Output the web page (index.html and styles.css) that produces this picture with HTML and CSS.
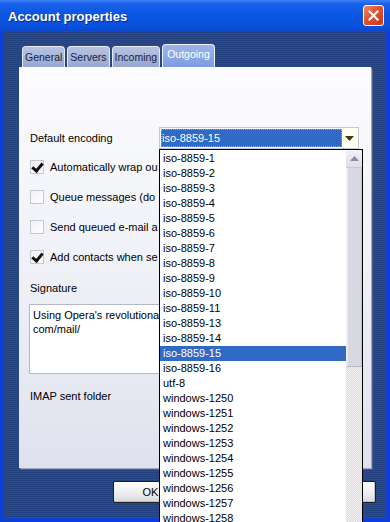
FILE: index.html
```html
<!DOCTYPE html>
<html lang="en">
<head>
  <meta charset="UTF-8" />
  <meta name="viewport" content="width=device-width, initial-scale=1.0"/>
  <title>Account properties</title>
  <link rel="stylesheet" href="styles.css">
</head>
<body>
  <div class="window">
    <div class="titlebar">
      <span class="title">Account properties</span>
      <button class="close" aria-label="Close">
        <svg width="11" height="11" viewBox="0 0 11 11">
          <path d="M1.5 1.5 L9.5 9.5 M9.5 1.5 L1.5 9.5" stroke="#fff" stroke-width="2.2" stroke-linecap="square"/>
        </svg>
      </button>
    </div>

    <div class="client">
      <ul class="tabs">
        <li class="tab">General</li>
        <li class="tab">Servers</li>
        <li class="tab">Incoming</li>
        <li class="tab active">Outgoing</li>
      </ul>

      <div class="panel">
        <div class="field-row">
          <label class="field-label">Default encoding</label>
          <div class="select">
            <span class="select-value">iso-8859-15</span>
            <span class="select-arrow">
              <svg width="9" height="5" viewBox="0 0 9 5"><path d="M0 0 H9 L4.5 5 Z" fill="#3d3b18"/></svg>
            </span>

            <div class="dropdown">
              <ul class="options">
                <li>iso-8859-1</li>
                <li>iso-8859-2</li>
                <li>iso-8859-3</li>
                <li>iso-8859-4</li>
                <li>iso-8859-5</li>
                <li>iso-8859-6</li>
                <li>iso-8859-7</li>
                <li>iso-8859-8</li>
                <li>iso-8859-9</li>
                <li>iso-8859-10</li>
                <li>iso-8859-11</li>
                <li>iso-8859-13</li>
                <li>iso-8859-14</li>
                <li class="selected">iso-8859-15</li>
                <li>iso-8859-16</li>
                <li>utf-8</li>
                <li>windows-1250</li>
                <li>windows-1251</li>
                <li>windows-1252</li>
                <li>windows-1253</li>
                <li>windows-1254</li>
                <li>windows-1255</li>
                <li>windows-1256</li>
                <li>windows-1257</li>
                <li>windows-1258</li>
              </ul>
              <div class="scrollbar">
                <div class="scroll-up">
                  <svg width="9" height="5" viewBox="0 0 9 5"><path d="M0 5 H9 L4.5 0 Z" fill="#8c8c98"/></svg>
                </div>
                <div class="scroll-thumb"></div>
                <div class="scroll-track"></div>
              </div>
            </div>
          </div>
        </div>

        <div class="check-row"><span class="checkbox checked"></span><span class="check-text">Automatically wrap outgoing text</span></div>
        <div class="check-row"><span class="checkbox"></span><span class="check-text">Queue messages (do not send immediately)</span></div>
        <div class="check-row"><span class="checkbox"></span><span class="check-text">Send queued e-mail after checking</span></div>
        <div class="check-row"><span class="checkbox checked"></span><span class="check-text">Add contacts when sending</span></div>

        <div class="section-label">Signature</div>
        <div class="signature">Using Opera's revolutionary e-mail client: http://www.opera.<br>com/mail/</div>

        <div class="section-label imap">IMAP sent folder</div>
      </div>

      <div class="buttons">
        <button class="btn">OK</button>
        <button class="btn">Cancel</button>
        <button class="btn">Help</button>
      </div>
    </div>
  </div>
</body>
</html>
```

FILE: styles.css
```css
* {
  margin: 0;
  padding: 0;
  box-sizing: border-box;
}

body {
  width: 390px;
  height: 522px;
  overflow: hidden;
  font-family: "Liberation Sans", Arial, sans-serif;
  font-size: 11px;
  color: #000;
}

.window {
  width: 390px;
  height: 522px;
  display: flex;
  flex-direction: column;
  background: #0c3fd6;
}

.titlebar {
  height: 31px;
  display: flex;
  align-items: center;
  justify-content: space-between;
  padding: 0 6px 0 8px;
  background: linear-gradient(to bottom, #3b80f4 0, #1760ea 4px, #0b56e2 14px, #0a51dc 26px, #0a48cc 31px);
}

.title {
  color: #fff;
  font-weight: bold;
  font-size: 13px;
  text-shadow: 1px 1px 0 #0a2a8c;
  margin-top: 1px;
}

.close {
  width: 21px;
  height: 21px;
  border: 1px solid #fff;
  border-radius: 3px;
  background: linear-gradient(to bottom right, #ef8a6a, #e0502e 45%, #c83a1a);
  display: flex;
  align-items: center;
  justify-content: center;
  margin-top: -1px;
}

.client {
  flex: 1;
  margin: 0 4px 4px 4px;
  background: repeating-linear-gradient(to bottom, #2c4b8b 0 1px, #23427f 1px 2px);
  padding: 13px 0 0 15px;
  display: flex;
  flex-direction: column;
}

.tabs {
  list-style: none;
  display: flex;
  align-items: flex-end;
  gap: 2px;
  padding-left: 3px;
  height: 23px;
}

.tab {
  height: 21px;
  padding: 0 2px;
  line-height: 21px;
  font-size: 10.5px;
  color: #1a2240;
  background: linear-gradient(to bottom, #b8c3e0, #97a7d0);
  border: 1px solid #e6eaf4;
  border-bottom: none;
  border-radius: 4px 4px 0 0;
}

.tab.active {
  height: 23px;
  line-height: 19px;
  padding: 0 4px;
  color: #fff;
  background: linear-gradient(to bottom, #9bb4ea, #7d9ddf);
  border-color: #eef2fb;
}

.panel {
  width: 352px;
  height: 401px;
  background: linear-gradient(to bottom, #fcfcfe 0%, #eff1f7 50%, #dfe2ee 100%);
  box-shadow: 1px 1px 0 #9aa2bc, 2px 2px 0 #4c5f8e;
  padding: 60px 0 0 10px;
  display: flex;
  flex-direction: column;
}

.field-row {
  display: flex;
  align-items: center;
  height: 22px;
}

.field-label {
  width: 130px;
  padding-left: 1px;
}

.select {
  position: relative;
  width: 200px;
  height: 22px;
  border: 1px solid #c4c8d4;
  background: #fff;
  display: flex;
  padding: 1px;
}

.select-value {
  flex: 1;
  background: #316ac5;
  color: #fff;
  outline: 1px dotted #8aa4d8;
  outline-offset: -1px;
  line-height: 18px;
  padding-left: 1px;
}

.select-arrow {
  width: 15px;
  background: #fffff0;
  display: flex;
  align-items: center;
  justify-content: center;
}

.dropdown {
  position: absolute;
  top: 21px;
  left: -1px;
  width: 204px;
  height: 380px;
  background: #fff;
  border: 1px solid #000;
  display: flex;
  z-index: 2;
}

.options {
  list-style: none;
  flex: 1;
  padding-top: 1px;
}

.options li {
  height: 15px;
  line-height: 15px;
  padding-left: 3px;
}

.options li.selected {
  background: #316ac5;
  color: #fff;
}

.scrollbar {
  width: 16px;
  display: flex;
  flex-direction: column;
}

.scroll-up {
  height: 18px;
  background: linear-gradient(to bottom, #f2f2f6, #dcdce4);
  border-bottom: 1px solid #c8c8d2;
  display: flex;
  align-items: center;
  justify-content: center;
}

.scroll-thumb {
  height: 199px;
  background: #d8d8e2;
  border-left: 2px solid #ececf2;
  border-right: 1px solid #c2c2cc;
  border-bottom: 1px solid #b8b8c4;
}

.scroll-track {
  flex: 1;
  background-image: repeating-conic-gradient(#f6f2f4 0 25%, #ddd8de 0 50%);
  background-size: 2px 2px;
}

.check-row {
  height: 30px;
  display: flex;
  align-items: center;
  gap: 6px;
  white-space: nowrap;
}

.field-row + .check-row {
  margin-top: 3px;
}

/* the open list covers the rest of these labels */
.check-text {
  width: 108px;
  overflow: hidden;
}

.checkbox {
  width: 14px;
  height: 14px;
  border: 1px solid #c5c8d2;
  background: linear-gradient(to bottom right, #f0f0f4, #ffffff);
  margin-left: 1px;
  position: relative;
}

.checkbox.checked::after {
  content: "";
  position: absolute;
  left: 3px;
  top: 0px;
  width: 4px;
  height: 8px;
  border-right: 3px solid #111;
  border-bottom: 3px solid #111;
  transform: rotate(40deg);
}

.section-label {
  margin-top: 10px;
  padding-left: 1px;
}

.signature {
  margin-top: 10px;
  width: 331px;
  height: 70px;
  background: #fff;
  border: 1px solid #b4b8c6;
  padding: 3px 3px;
  line-height: 14px;
  white-space: nowrap;
  overflow: hidden;
}

.section-label.imap {
  margin-top: 16px;
}

.buttons {
  display: flex;
  gap: 6px;
  margin-top: 13px;
  padding-left: 94px;
}

.btn {
  width: 75px;
  height: 22px;
  font-family: "Liberation Sans", Arial, sans-serif;
  font-size: 11px;
  color: #000;
  border: 1px solid #1c1c24;
  border-radius: 2px;
  background: linear-gradient(to bottom, #ffffff, #ececf0 60%, #d6d6de);
  box-shadow: inset -1px -1px 0 #c0c0ca;
}

.btn:last-child {
  margin-left: 26px;
}
```
